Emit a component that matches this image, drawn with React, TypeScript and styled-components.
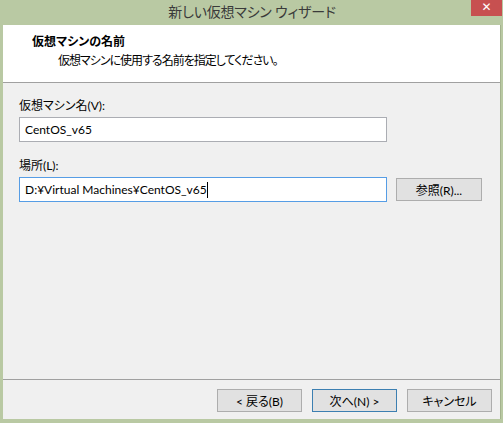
import React from "react";
import styled, { createGlobalStyle } from "styled-components";

const Global = createGlobalStyle`
  html, body { margin: 0; padding: 0; background: #b9c9a3; }
  #root { width: 503px; height: 423px; }
  * { box-sizing: border-box; }
`;

const FONT = `Lato, "Noto Sans CJK JP", sans-serif`;

const Window = styled.div`
  width: 503px;
  height: 423px;
  background: #b9c9a3;
  display: flex;
  flex-direction: column;
  padding: 0 2px 4px 3px;
  font-family: ${FONT};
  font-feature-settings: "palt";
  font-size: 12px;
  color: #000;
`;

const TitleBar = styled.div`
  height: 25px;
  flex: none;
  display: grid;
  grid-template-columns: 1fr auto 1fr;
  align-items: start;
`;

const TitleText = styled.div`
  grid-column: 2;
  font-size: 14px;
  line-height: 24px;
  color: #3a3a3a;
  letter-spacing: -0.2px;
`;

const CloseButton = styled.div`
  grid-column: 3;
  justify-self: end;
  width: 31px;
  height: 16px;
  margin-right: -1px;
  background: #c75050;
  color: #fff;
  font-size: 12px;
  font-weight: bold;
  line-height: 15px;
  text-align: center;
  font-family: "DejaVu Sans", sans-serif;
`;

const Client = styled.div`
  flex: 1;
  display: flex;
  flex-direction: column;
  background: #f0f0f0;
  border-right: 1px solid #a4b38e;
`;

const Header = styled.div`
  height: 58px;
  flex: none;
  background: #fff;
  border-bottom: 1px solid #a0a0a0;
  padding: 8px 0 0 29px;
`;

const HeaderTitle = styled.div`
  font-weight: bold;
  line-height: 17px;
`;

const HeaderSub = styled.div`
  line-height: 17px;
  margin-top: 2px;
  padding-left: 26px;
  letter-spacing: -1px;
`;

const Body = styled.div`
  flex: 1;
  padding: 15px 0 0 16px;
  display: flex;
  flex-direction: column;
`;

const Label = styled.div<{ $top?: number }>`
  line-height: 16px;
  margin-top: ${(p) => p.$top ?? 0}px;
`;

const Row = styled.div`
  display: flex;
  align-items: center;
  gap: 9px;
  margin-top: 3px;
`;

const TextBox = styled.div<{ $focused?: boolean }>`
  width: 368px;
  height: 25px;
  background: #fff;
  border: 1px solid ${(p) => (p.$focused ? "#569de5" : "#abadb3")};
  padding: 0 5px;
  display: flex;
  align-items: center;
  font-size: 12px;
  white-space: pre;
`;

const Caret = styled.span`
  display: inline-block;
  width: 1px;
  height: 16px;
  background: #000;
`;

const Button = styled.div<{ $default?: boolean; $w?: number }>`
  width: ${(p) => p.$w ?? 85}px;
  height: 23px;
  background: #e1e1e1;
  border: 1px solid ${(p) => (p.$default ? "#3c7fb1" : "#adadad")};
  display: flex;
  align-items: center;
  justify-content: center;
  font-size: 12px;
  white-space: pre;
`;

const Footer = styled.div`
  height: 40px;
  flex: none;
  border-top: 1px solid #a0a0a0;
  display: flex;
  justify-content: flex-end;
  align-items: flex-start;
  gap: 10px;
  padding: 9px 8px 0 0;
`;

export default function App() {
  return (
    <>
      <Global />
      <Window>
        <TitleBar>
          <TitleText>新しい仮想マシン ウィザード</TitleText>
          <CloseButton>✕</CloseButton>
        </TitleBar>
        <Client>
          <Header>
            <HeaderTitle>仮想マシンの名前</HeaderTitle>
            <HeaderSub>仮想マシンに使用する名前を指定してください。</HeaderSub>
          </Header>
          <Body>
            <Label>仮想マシン名(V):</Label>
            <Row>
              <TextBox>CentOS_v65</TextBox>
            </Row>
            <Label $top={16}>場所(L):</Label>
            <Row>
              <TextBox $focused>
                D:¥Virtual Machines¥CentOS_v65<Caret />
              </TextBox>
              <Button $w={86}>参照(R)...</Button>
            </Row>
          </Body>
          <Footer>
            <Button>{"< 戻る(B)"}</Button>
            <Button $default>{"次へ(N) >"}</Button>
            <Button>キャンセル</Button>
          </Footer>
        </Client>
      </Window>
    </>
  );
}
